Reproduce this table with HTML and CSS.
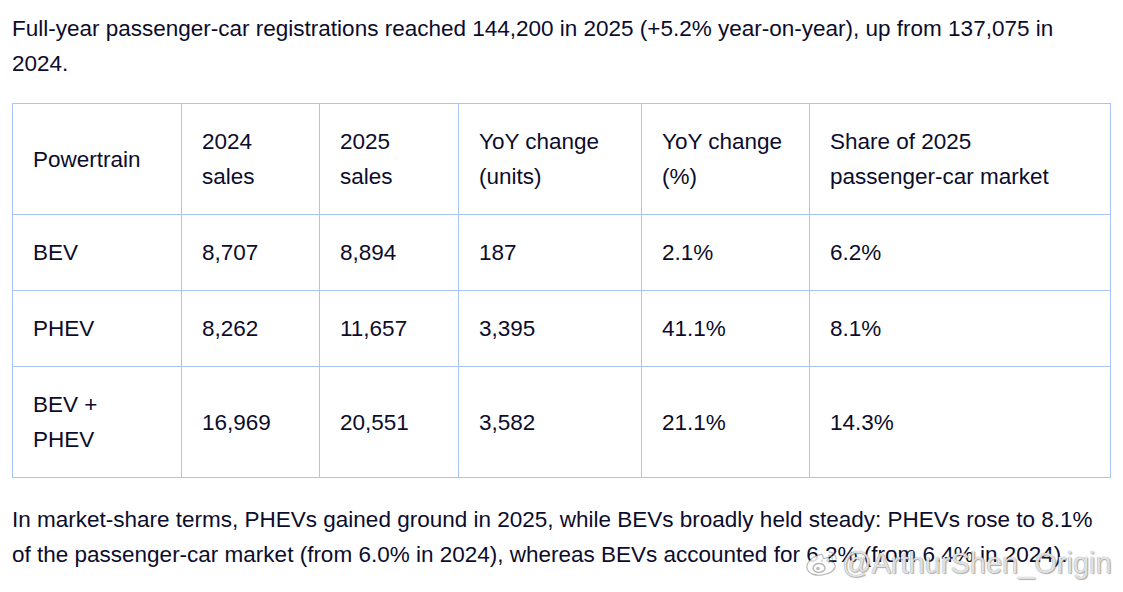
FILE: index.html
```html
<!DOCTYPE html>
<html lang="en">
<head>
<meta charset="utf-8">
<link rel="stylesheet" href="styles.css">
</head>
<body>
<main class="page">
  <p class="para">Full-year passenger-car registrations reached 144,200 in 2025 (+5.2% year-on-year), up from 137,075 in 2024.</p>
  <table class="data">
    <colgroup>
      <col class="c1"><col class="c2"><col class="c3"><col class="c4"><col class="c5"><col class="c6">
    </colgroup>
    <thead>
      <tr>
        <th>Powertrain</th>
        <th>2024<br>sales</th>
        <th>2025<br>sales</th>
        <th>YoY change<br>(units)</th>
        <th>YoY change<br>(%)</th>
        <th>Share of 2025<br>passenger-car market</th>
      </tr>
    </thead>
    <tbody>
      <tr><td>BEV</td><td>8,707</td><td>8,894</td><td>187</td><td>2.1%</td><td>6.2%</td></tr>
      <tr><td>PHEV</td><td>8,262</td><td>11,657</td><td>3,395</td><td>41.1%</td><td>8.1%</td></tr>
      <tr><td>BEV +<br>PHEV</td><td>16,969</td><td>20,551</td><td>3,582</td><td>21.1%</td><td>14.3%</td></tr>
    </tbody>
  </table>
  <p class="para">In market-share terms, PHEVs gained ground in 2025, while BEVs broadly held steady: PHEVs rose to 8.1% of the passenger-car market (from 6.0% in 2024), whereas BEVs accounted for 6.2% (from 6.4% in 2024).</p>
</main>
<div class="watermark">
  <svg class="wb-logo" viewBox="0 0 34 28" width="34" height="28" aria-hidden="true">
    <path d="M14 6 C7 8 1 14 2 19 C3 25 11 27 17 26 C25 25 31 21 30 16 C29 13 26 12 24 13 C25 10 24 8 21 9 C19 10 18 10 18 8 C18 5 16 5 14 6 Z" fill="rgba(255,255,255,0.85)" stroke="rgba(120,120,120,0.55)" stroke-width="1.2"/>
    <ellipse cx="14" cy="19" rx="6" ry="4.5" fill="none" stroke="rgba(120,120,120,0.55)" stroke-width="1.4"/>
    <circle cx="13" cy="19.5" r="1.8" fill="rgba(120,120,120,0.5)"/>
    <path d="M24 3 C28 3 31 6 31 10" fill="none" stroke="rgba(150,150,150,0.5)" stroke-width="1.6" stroke-linecap="round"/>
    <path d="M23.5 6.5 C25.5 6.5 27.5 8 27.5 10" fill="none" stroke="rgba(150,150,150,0.5)" stroke-width="1.4" stroke-linecap="round"/>
  </svg>
  <span class="wb-text">@ArthurShen_Origin</span>
</div>
</body>
</html>
```

FILE: styles.css
```css
html, body {
  margin: 0;
  padding: 0;
  background: #ffffff;
}

body {
  font-family: "Liberation Sans", Arial, sans-serif;
  font-size: 22.5px;
  line-height: 35px;
  color: #0c0c2c;
}

.page {
  padding: 11px 12px 0 12px;
  width: 1098px;
}

.para {
  margin: 0;
  max-width: 1095px;
}

.data {
  border-collapse: collapse;
  table-layout: fixed;
  width: 1098px;
  margin: 22px 0 24px 0;
}

.c1 { width: 169px; }
.c2 { width: 138px; }
.c3 { width: 139px; }
.c4 { width: 183px; }
.c5 { width: 168px; }
.c6 { width: 301px; }

.data th,
.data td {
  border: 1px solid #a9c3fb;
  padding: 20px 20px;
  text-align: left;
  vertical-align: middle;
  font-weight: normal;
}

.watermark {
  position: absolute;
  left: 805px;
  top: 546px;
  display: flex;
  align-items: center;
  gap: 3px;
}

.wb-text {
  font-family: "Liberation Sans", Arial, sans-serif;
  font-size: 29px;
  line-height: 34px;
  color: rgba(255, 255, 255, 0.8);
  text-shadow: 0 0 1px rgba(80, 80, 80, 0.75), 1px 1px 1px rgba(110, 110, 110, 0.5);
}
```
